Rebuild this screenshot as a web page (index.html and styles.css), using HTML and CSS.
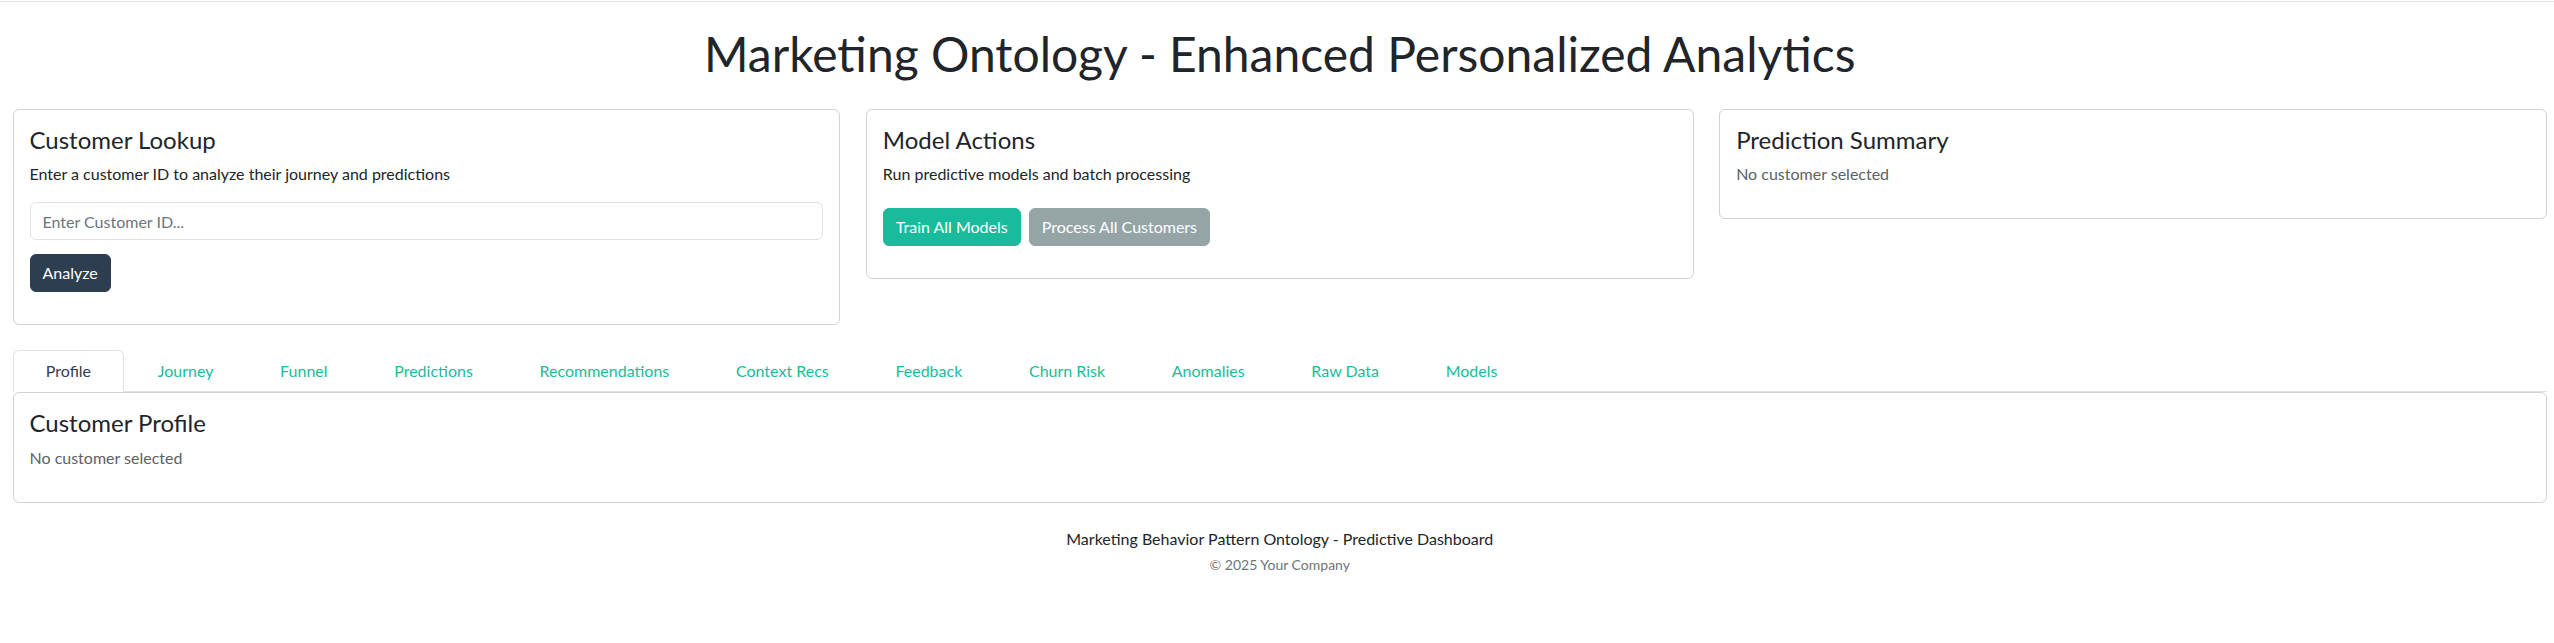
FILE: index.html
```html
<!DOCTYPE html>
<html lang="en">
<head>
<meta charset="utf-8">
<title>Marketing Ontology - Enhanced Personalized Analytics</title>
<link rel="stylesheet" href="styles.css">
</head>
<body>
<div class="topline"></div>
<div class="page">
  <h1 class="title">Marketing Ontology - Enhanced Personalized Analytics</h1>

  <div class="cards">
    <div class="card">
      <div class="card-body">
        <h4 class="card-title">Customer Lookup</h4>
        <p class="card-text">Enter a customer ID to analyze their journey and predictions</p>
        <form class="lookup-form">
          <input class="form-control" type="text" placeholder="Enter Customer ID...">
          <div class="form-actions">
            <button type="button" class="btn btn-primary">Analyze</button>
          </div>
        </form>
      </div>
    </div>

    <div class="card">
      <div class="card-body">
        <h4 class="card-title">Model Actions</h4>
        <p class="card-text">Run predictive models and batch processing</p>
        <div class="btn-row">
          <button type="button" class="btn btn-success">Train All Models</button>
          <button type="button" class="btn btn-secondary">Process All Customers</button>
        </div>
      </div>
    </div>

    <div class="card">
      <div class="card-body">
        <h4 class="card-title">Prediction Summary</h4>
        <p class="card-text muted summary-text">No customer selected</p>
      </div>
    </div>
  </div>

  <ul class="nav-tabs">
    <li><a class="nav-link active">Profile</a></li>
    <li><a class="nav-link">Journey</a></li>
    <li><a class="nav-link">Funnel</a></li>
    <li><a class="nav-link">Predictions</a></li>
    <li><a class="nav-link">Recommendations</a></li>
    <li><a class="nav-link">Context Recs</a></li>
    <li><a class="nav-link">Feedback</a></li>
    <li><a class="nav-link">Churn Risk</a></li>
    <li><a class="nav-link">Anomalies</a></li>
    <li><a class="nav-link">Raw Data</a></li>
    <li><a class="nav-link">Models</a></li>
  </ul>

  <div class="card tab-card">
    <div class="card-body">
      <h4 class="card-title">Customer Profile</h4>
      <p class="card-text muted profile-text">No customer selected</p>
    </div>
  </div>

  <footer class="footer">
    <p class="footer-main">Marketing Behavior Pattern Ontology - Predictive Dashboard</p>
    <p class="footer-copy">© 2025 Your Company</p>
  </footer>
</div>
</body>
</html>
```

FILE: styles.css
```css
* { box-sizing: border-box; }

html, body {
  margin: 0;
  padding: 0;
  background: #fff;
}

body {
  font-family: Lato, "Noto Sans", "Liberation Sans", sans-serif;
  font-size: 16px;
  line-height: 1.5;
  color: #212529;
}

.topline {
  height: 1px;
  margin-top: 1px;
  background: #dfe4e8;
}

.page {
  padding: 0 7px 0 12.5px;
}

.title {
  margin: 23px 0 26px;
  font-size: 48px;
  font-weight: 400;
  line-height: 1.2;
  text-align: center;
  color: #212529;
}

.cards {
  display: grid;
  grid-template-columns: repeat(3, 1fr);
  gap: 25.5px;
  align-items: start;
}

.card {
  background: #fff;
  border: 1px solid #d2d2d2;
  border-radius: 6px;
}

.card-body {
  padding: 16px;
}

.card-title {
  margin: 0 0 8px;
  font-size: 24px;
  font-weight: 400;
  line-height: 1.2;
  color: #212529;
}

.card-text {
  margin: 0 0 16px;
}

.muted {
  color: #5c6166;
}

.summary-text {
  margin-bottom: 16px;
}

.lookup-form {
  margin: 0 0 16px;
}

.form-control {
  display: block;
  width: 100%;
  height: 38px;
  padding: 6px 12px;
  font-family: inherit;
  font-size: 16px;
  line-height: 1.5;
  color: #212529;
  background: #fff;
  border: 1px solid #dee2e6;
  border-radius: 6px;
  margin: 0 0 14px;
  outline: none;
}

.form-control::placeholder {
  color: #6c757d;
}

.btn {
  display: inline-block;
  height: 38px;
  padding: 6px 12px;
  font-family: inherit;
  font-size: 16px;
  line-height: 1.5;
  color: #fff;
  border: 1px solid transparent;
  border-radius: 6px;
  cursor: pointer;
}

.btn-primary { background: #2c3e50; border-color: #2c3e50; }
.btn-success { background: #18bc9c; border-color: #18bc9c; }
.btn-secondary { background: #95a5a6; border-color: #95a5a6; }

.btn-row {
  display: flex;
  gap: 8px;
  padding-top: 6px;
  margin: 0 0 16px;
}

.nav-tabs {
  display: flex;
  list-style: none;
  margin: 24.5px 0 0;
  padding: 0;
  border-bottom: 1px solid #dee2e6;
}

.nav-link {
  display: block;
  padding: 8px 32.33px;
  margin-bottom: -1px;
  border: 1px solid transparent;
  border-top-left-radius: 6px;
  border-top-right-radius: 6px;
  color: #18bc9c;
  font-size: 16px;
  line-height: 1.5;
  text-decoration: none;
}

.nav-link.active {
  color: #34404f;
  background: #fff;
  border-color: #dee2e6 #dee2e6 #fff;
}

.tab-card {
  margin-top: 0;
}

.footer {
  margin-top: 24px;
  text-align: center;
}

.footer-main {
  margin: 0 0 3px;
  font-size: 16px;
  line-height: 1.5;
  color: #212529;
}

.footer-copy {
  margin: 0;
  font-size: 14px;
  line-height: 1.5;
  color: #6c757d;
}
```
